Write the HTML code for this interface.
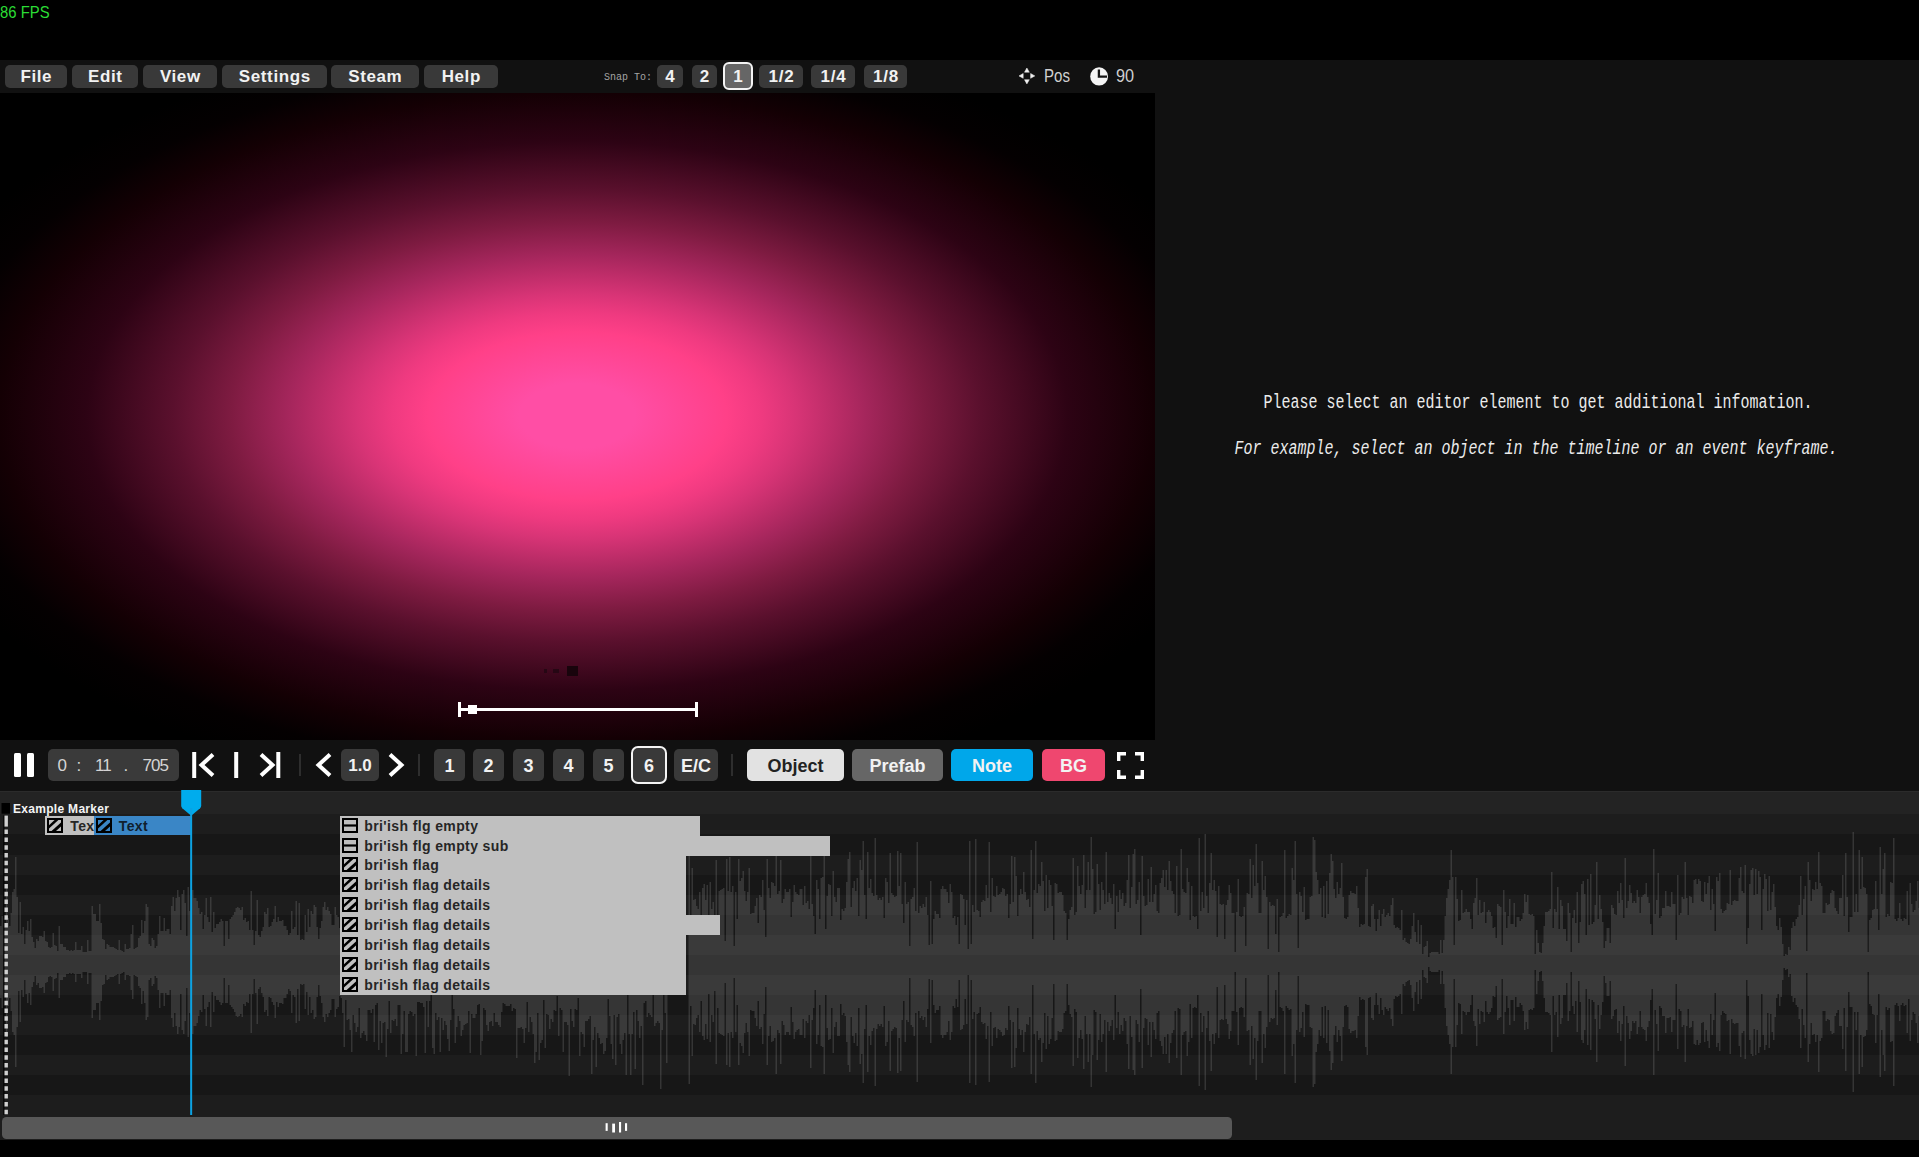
<!DOCTYPE html>
<html lang="en">
<head>
<meta charset="utf-8">
<title>Editor</title>
<style>
*{box-sizing:border-box;margin:0;padding:0}
html,body{width:1919px;height:1157px;overflow:hidden;background:#000}
body{position:relative;font-family:"Liberation Sans",sans-serif;color:#fff}
.abs{position:absolute}
#fps{left:-0.5px;top:2.5px;font-size:17px;line-height:20px;color:#2bdc35;transform:scaleX(0.875);transform-origin:0 0;white-space:nowrap}
#topbar{left:0;top:60px;width:1919px;height:33px;background:#111}
#rightpanel{left:1155px;top:93px;width:764px;height:647px;background:#111}
#preview{left:0;top:93px;width:1155px;height:647px;background:radial-gradient(ellipse 577px 323px at 577px 323px,#ff4ea5 0%,#ff4ea5 10%,#ff4088 26%,#ef3a80 32%,#d83476 38%,#a5265c 50%,#7e1b41 60%,#5a102d 70%,#2d0314 85%,#140004 100%,#040001 110%,#000 120%)}
#toolbar{left:0;top:740px;width:1919px;height:51px;background:#111}
.btn{position:absolute;background:#393939;border-radius:5px;color:#f2f2f2;font-weight:bold;text-align:center;white-space:nowrap}
.menu{top:65px;height:23px;font-size:17px;line-height:23px;letter-spacing:0.6px;text-indent:0.6px}
.snap{top:65px;height:23px;font-size:17px;line-height:23px;letter-spacing:0.8px;text-indent:0.8px}
.tb{top:749px;height:32px;font-size:18px;line-height:32px;padding-top:1px}
.info{left:1036px;width:1000px;text-align:center;font-family:"Liberation Mono",monospace;font-size:19.5px;line-height:24px;color:#ececec;white-space:nowrap;transform:scaleX(0.769);transform-origin:50% 0}
.tm{top:750px;font-size:17px;line-height:32px;color:#d4d4d4;letter-spacing:-1px;white-space:nowrap}
/* timeline */
#tl{left:0;top:791px;width:1919px;height:349px;background:#222;overflow:hidden}
.obj{position:absolute;background:#c0c0c0;color:#262626;font-weight:bold;font-size:14px;letter-spacing:0.38px;white-space:nowrap}
.obj span{position:absolute;left:24px;top:0;line-height:20px}
.ico{position:absolute;left:2px;top:2px;width:16px;height:15px;color:#c0c0c0}
</style>
</head>
<body>
<div id="fps" class="abs">86 FPS</div>
<div id="topbar" class="abs"></div>
<div id="rightpanel" class="abs"></div>
<div id="preview" class="abs"></div>
<div id="toolbar" class="abs"></div>
<div class="btn menu" style="left:5px;width:62px">File</div>
<div class="btn menu" style="left:72px;width:66px">Edit</div>
<div class="btn menu" style="left:143px;width:74px">View</div>
<div class="btn menu" style="left:222px;width:105px">Settings</div>
<div class="btn menu" style="left:331px;width:88px">Steam</div>
<div class="btn menu" style="left:424px;width:74px">Help</div>
<div class="abs" id="snapto" style="left:604px;top:70.5px;font-family:'Liberation Mono',monospace;font-size:10px;line-height:14px;color:#a4a4a4;letter-spacing:0;white-space:nowrap">Snap To:</div>
<div class="btn snap" style="left:657px;width:26px">4</div>
<div class="btn snap" style="left:692px;width:25px">2</div>
<div class="btn snap" style="left:723px;top:62px;width:30px;height:28px;line-height:25.5px;background:#666;border:2px solid #f4f4f4;border-radius:6px">1</div>
<div class="btn snap" style="left:759px;width:44px">1/2</div>
<div class="btn snap" style="left:811px;width:44px">1/4</div>
<div class="btn snap" style="left:864px;width:43px">1/8</div>
<svg class="abs" style="left:1017px;top:66px" width="20" height="20" viewBox="1017 66 20 20"><g fill="#f0f0f0" stroke="#f0f0f0" stroke-width="0.5" stroke-linejoin="round"><path d="M1026.9 68 L1029.3 72.2 H1024.5Z"/><path d="M1026.9 83.9 L1029.3 79.7 H1024.5Z"/><path d="M1019 75.9 L1023.2 73.5 V78.3Z"/><path d="M1034.8 75.9 L1030.6 73.5 V78.3Z"/></g></svg>
<div class="abs" style="left:1043.5px;top:65px;font-size:17.5px;line-height:23px;color:#d0d0d0;transform:scaleX(0.86);transform-origin:0 0;white-space:nowrap">Pos</div>
<svg class="abs" style="left:1089px;top:66px" width="20" height="21" viewBox="1089 66 20 21"><ellipse cx="1099.1" cy="76.4" rx="8.9" ry="9.2" fill="#f4f4f4"/><path d="M1098.9 69.5 V76.7 H1107" stroke="#151515" stroke-width="2.3" fill="none"/></svg>
<div class="abs" style="left:1115.5px;top:65px;font-size:17.5px;line-height:23px;color:#d0d0d0;transform:scaleX(0.93);transform-origin:0 0;white-space:nowrap">90</div>
<div class="abs" style="left:458px;top:702px;width:3px;height:15px;background:#fff"></div>
<div class="abs" style="left:695px;top:702px;width:3px;height:15px;background:#fff"></div>
<div class="abs" style="left:458px;top:708px;width:240px;height:3px;background:#fff"></div>
<div class="abs" style="left:468px;top:705px;width:9px;height:9px;background:#fff"></div>
<div class="abs" style="left:567px;top:666px;width:11px;height:10px;background:#18040c"></div>
<div class="abs" style="left:553px;top:669px;width:6px;height:4px;background:#260714"></div>
<div class="abs" style="left:544px;top:669px;width:3px;height:4px;background:#260714"></div>
<div class="abs info" style="top:390.7px;margin-left:2px">Please select an editor element to get additional infomation.</div>
<div class="abs info" style="top:437.1px;font-style:italic">For example, select an object in the timeline or an event keyframe.</div>

<div class="abs" style="left:14px;top:753px;width:7px;height:24px;background:#fff;border-radius:1.5px"></div>
<div class="abs" style="left:27px;top:753px;width:7px;height:24px;background:#fff;border-radius:1.5px"></div>
<div class="btn tb" style="left:48px;width:131px;background:#3a3a3a"></div>
<div class="abs tm" style="left:57.5px">0</div><div class="abs tm" style="left:76.5px">:</div><div class="abs tm" style="left:95px">11</div><div class="abs tm" style="left:123.5px">.</div><div class="abs tm" style="left:142.5px">705</div>
<svg class="abs" style="left:185px;top:748px" width="225" height="34" viewBox="185 748 225 34" fill="none" stroke="#fff" stroke-width="4">
<path d="M194.2 752 V778"/><path d="M213 754.5 L201.5 765 L213 775.5" stroke-linejoin="miter"/>
<path d="M236.2 752 V778"/>
<path d="M261 754.5 L272.5 765 L261 775.5"/><path d="M278.3 752 V778"/>
<path d="M330 754.5 L318.5 765 L330 775.5"/>
<path d="M390 754.5 L401.5 765 L390 775.5"/>
</svg>
<div class="abs" style="left:299px;top:754px;width:2px;height:22px;background:#2e2e2e"></div>
<div class="btn tb" style="left:341px;width:38px;font-size:17px">1.0</div>
<div class="abs" style="left:418px;top:754px;width:2px;height:22px;background:#2e2e2e"></div>
<div class="btn tb" style="left:434px;width:31px">1</div>
<div class="btn tb" style="left:473px;width:31px">2</div>
<div class="btn tb" style="left:513px;width:31px">3</div>
<div class="btn tb" style="left:553px;width:31px">4</div>
<div class="btn tb" style="left:593px;width:31px">5</div>
<div class="btn tb" style="left:631px;top:746px;width:36px;height:38px;line-height:34px;border:2px solid #f4f4f4;border-radius:7px">6</div>
<div class="btn tb" style="left:674px;width:44px">E/C</div>
<div class="abs" style="left:731px;top:754px;width:2px;height:22px;background:#2e2e2e"></div>
<div class="btn tb" style="left:747px;width:97px;background:#e2e2e2;color:#222">Object</div>
<div class="btn tb" style="left:852px;width:91px;background:#666">Prefab</div>
<div class="btn tb" style="left:951px;width:82px;background:#00a7ea">Note</div>
<div class="btn tb" style="left:1042px;width:63px;background:#ef476f">BG</div>
<svg class="abs" style="left:1117px;top:752px" width="27" height="27" viewBox="0 0 27 27" fill="none" stroke="#fff" stroke-width="3.4"><path d="M1.7 9 V1.7 H9"/><path d="M18 1.7 H25.3 V9"/><path d="M25.3 18 V25.3 H18"/><path d="M9 25.3 H1.7 V18"/></svg>

<svg class="abs" style="left:0;top:0" width="1919" height="1157" viewBox="0 0 1919 1157" shape-rendering="crispEdges">
<rect x="0" y="790.5" width="1919" height="24" fill="#232323"/><rect x="0" y="790.6" width="1919" height="1" fill="#2b2b2b"/>
<rect x="0" y="814.4" width="1919" height="325.6" fill="#1d1d1d"/>
<rect x="0" y="834.45" width="1919" height="20.05" fill="#171717"/><rect x="0" y="874.55" width="1919" height="20.05" fill="#171717"/><rect x="0" y="914.65" width="1919" height="20.05" fill="#171717"/><rect x="0" y="954.75" width="1919" height="20.05" fill="#171717"/><rect x="0" y="994.85" width="1919" height="20.05" fill="#171717"/><rect x="0" y="1034.95" width="1919" height="20.05" fill="#171717"/><rect x="0" y="1075.05" width="1919" height="20.05" fill="#171717"/>
<path id="wave" fill="#fff" fill-opacity="0.13" shape-rendering="geometricPrecision" d="M0,962V926H1.5V916H3V918H4.5V927H6V887H7.5V918H9V926H10.5V913H12V892H13.5V889H15V857H16.5V897H18V933H19.5V902H21V934H22.5V927H24V944H25.5V930H27V921H28.5V931H30V919H31.5V937H33V942H34.5V948H36V939H37.5V941H39V936H42V937H43.5V931H45V941H46.5V942H48V947H49.5V948H51V947H52.5V933H54V945H55.5V946H57V951H58.5V926H60V944H63V947H66V950H69V951H70.5V950H72V951H73.5V950H75V942H76.5V950H81V946H82.5V952H87V940H88.5V951H91.5V906H93V914H96V921H99V904H100.5V923H102V939H103.5V940H105V949H106.5V944H108V945H109.5V947H114V948H115.5V949H117V950H118.5V940H120V950H121.5V951H123V952H124.5V944H126V949H129V948H130.5V934H132V925H133.5V949H135V948H136.5V947H138V938H139.5V936H141V920H142.5V933H144V921H145.5V904H147V907H148.5V944H150V946H151.5V938H153V940H154.5V948H156V946H157.5V934H159V916H160.5V931H163.5V918H165V931H166.5V929H169.5V934H171V906H172.5V897H174V911H175.5V898H177V890H178.5V897H180V930H181.5V894H183V890H184.5V903H186V936H187.5V887H189V911H190.5V910H192V890H193.5V898H196.5V901H198V908H199.5V914H201V912H202.5V929H204V915H205.5V898H207V917H208.5V922H210V897H211.5V932H213V912H214.5V928H216V924H219V922H220.5V919H222V921H223.5V946H225V921H228V939H229.5V919H231V917H232.5V915H234V912H235.5V908H237V907H238.5V908H240V910H241.5V907H243V920H244.5V918H246V922H247.5V921H249V930H250.5V891H252V930H253.5V945H255V931H256.5V900H258V935H259.5V937H261V931H262.5V927H264V912H265.5V914H267V908H268.5V927H270V926H271.5V922H273V919H274.5V906H276V922H277.5V917H279V921H282V920H283.5V926H286.5V930H288V935H289.5V933H291V911H292.5V929H294V927H295.5V901H297V935H298.5V903H300V940H301.5V939H303V940H304.5V915H306V932H307.5V909H309V927H310.5V911H312V914H313.5V905H315V907H316.5V927H318V939H319.5V928H321V921H322.5V907H324V902H325.5V910H327V907H328.5V911H330V914H331.5V925H334.5V907H336V915H337.5V917H339V928H340.5V926H342V911H343.5V877H345V924H346.5V904H348V905H349.5V894H351V872H352.5V909H354V901H355.5V892H357V897H358.5V916H360V886H361.5V891H363V893H364.5V889H366V883H367.5V914H370.5V911H372V915H373.5V882H375V919H376.5V921H378V874H379.5V903H381V881H382.5V901H384V902H385.5V867H387V895H388.5V923H390V891H391.5V904H393V903H394.5V905H396V898H397.5V919H400.5V870H402V890H403.5V913H405V872H408V910H409.5V913H411V912H412.5V908H414V910H415.5V868H417V922H420V921H423V917H424.5V871H426V923H427.5V897H429V923H430.5V944H432V876H433.5V870H435V911H436.5V904H438V907H439.5V872H441V906H442.5V894H444V903H445.5V899H447V885H448.5V873H450V904H451.5V935H453V915H454.5V881H456V897H457.5V908H459V903H460.5V888H462V894H463.5V899H465V900H466.5V901H468V913H469.5V871H471V910H472.5V906H475.5V910H477V919H478.5V920H480V869H481.5V883H483V916H484.5V914H486V899H487.5V893H489V902H490.5V903H492V898H493.5V911H495V902H498V899H499.5V897H501V912H502.5V921H504V920H505.5V918H510V920H511.5V913H513V916H514.5V915H516V866H517.5V896H520.5V897H522V895H523.5V881H525V896H526.5V922H528V892H529.5V907H531V902H532.5V890H534V861H535.5V872H537V911H538.5V864H540V881H541.5V884H543V924H544.5V876H546V910H547.5V909H549V895H550.5V905H552V902H553.5V914H555V913H556.5V928H558V888H559.5V916H561V914H562.5V872H564V902H567V899H568.5V848H570V915H571.5V903H573V897H574.5V915H576V914H577.5V926H579V868H580.5V892H582V890H583.5V877H585V903H588V905H589.5V908H591V850H592.5V884H594V897H595.5V857H597V891H598.5V886H600V880H601.5V881H603V870H604.5V873H606V886H607.5V925H609V908H610.5V880H612V865H613.5V909H615V859H616.5V907H618V910H619.5V880H621V870H622.5V884H624V891H625.5V849H627V933H628.5V890H630V849H631.5V890H633V912H634.5V855H636V914H637.5V903H639V886H640.5V898H642V839H643.5V921H645V923H646.5V907H648V911H649.5V909H651V907H652.5V933H654V898H655.5V901H657V903H658.5V901H660V835H661.5V894H663V935H664.5V911H666V861H667.5V938H669V962H688.5V840H690V918H691.5V868H693V900H694.5V899H696V906H697.5V909H699V892H700.5V923H702V888H703.5V884H705V900H706.5V885H708V930H709.5V882H711V909H712.5V902H714V933H715.5V860H717V916H718.5V891H720V890H721.5V889H723V888H724.5V941H726V859H727.5V891H729V857H730.5V892H732V886H733.5V946H735V892H736.5V919H738V859H739.5V881H741V878H742.5V871H744V891H745.5V901H747V892H748.5V868H750V914H751.5V913H754.5V906H756V898H757.5V923H759V895H760.5V897H762V880H763.5V910H765V937H766.5V859H768V888H769.5V898H771V882H772.5V883H774V886H775.5V850H777V894H778.5V891H780V860H781.5V903H783V899H784.5V889H786V892H789V889H790.5V917H792V902H793.5V885H795V892H796.5V894H798V895H799.5V889H802.5V905H804V886H805.5V903H807V901H808.5V909H810V856H811.5V904H813V916H814.5V934H816V880H817.5V889H819V919H820.5V878H822V877H823.5V850H825V929H826.5V896H828V884H829.5V885H831V916H832.5V871H834V897H835.5V902H837V888H840V920H841.5V909H843V911H844.5V908H846V882H847.5V859H849V852H850.5V907H852V888H853.5V881H855V891H856.5V878H858V916H859.5V860H861V870H862.5V841H864V895H865.5V919H867V852H868.5V888H870V879H871.5V893H873V896H874.5V838H876V895H877.5V900H879V898H880.5V900H882V897H883.5V918H885V878H886.5V882H888V903H889.5V853H891V893H892.5V895H894V897H895.5V896H897V851H898.5V886H900V853H901.5V904H903V923H904.5V882H906V904H907.5V902H909V946H910.5V899H912V897H913.5V888H915V911H916.5V842H918V913H919.5V906H921V908H922.5V904H924V907H925.5V897H927V915H928.5V945H930V881H931.5V944H933V919H934.5V911H936V914H939V918H940.5V889H942V886H943.5V889H946.5V892H948V903H949.5V884H951V892H952.5V918H954V916H955.5V925H957V917H958.5V944H960V894H961.5V895H963V899H964.5V925H966V900H967.5V949H969V841H970.5V944H972V905H973.5V912H975V839H976.5V910H978V911H979.5V917H981V902H982.5V900H984V901H985.5V885H987V898H988.5V842H990V912H991.5V878H993V896H994.5V897H996V886H997.5V895H999V894H1000.5V892H1002V888H1003.5V889H1005V896H1006.5V894H1008V918H1009.5V904H1011V856H1012.5V902H1014V857H1015.5V876H1017V916H1018.5V895H1020V889H1021.5V894H1023V872H1024.5V892H1026V900H1027.5V899H1029V907H1030.5V850H1032V939H1033.5V890H1035V841H1036.5V893H1038V884H1039.5V886H1041V862H1042.5V881H1044V911H1045.5V875H1047V908H1048.5V880H1050V885H1051.5V906H1053V940H1054.5V883H1056V884H1057.5V893H1059V892H1062V895H1063.5V911H1065V913H1066.5V940H1068V919H1069.5V910H1071V907H1072.5V858H1074V915H1075.5V912H1077V866H1078.5V886H1080V894H1081.5V885H1083V855H1084.5V908H1086V890H1087.5V862H1089V890H1090.5V837H1092V869H1093.5V914H1095V912H1096.5V864H1098V884H1099.5V910H1101V882H1102.5V890H1104V904H1105.5V852H1107V902H1108.5V893H1110V898H1111.5V904H1113V884H1114.5V929H1116V896H1117.5V912H1119V890H1120.5V899H1122V893H1123.5V906H1125V903H1126.5V880H1128V855H1129.5V908H1131V887H1132.5V854H1134V849H1135.5V904H1137V900H1138.5V882H1140V935H1141.5V856H1143V896H1144.5V906H1146V905H1147.5V879H1149V902H1150.5V867H1152V902H1153.5V894H1155V885H1156.5V911H1158V913H1159.5V883H1161V878H1162.5V870H1164V887H1165.5V870H1167V890H1168.5V861H1170V881H1171.5V891H1173V894H1174.5V913H1176V866H1177.5V916H1179V915H1180.5V849H1182V889H1183.5V892H1185V893H1186.5V868H1188V882H1189.5V920H1191V886H1192.5V916H1194V917H1195.5V916H1197V929H1198.5V838H1200V911H1201.5V892H1203V908H1204.5V834H1206V896H1207.5V913H1209V883H1210.5V853H1212V890H1213.5V880H1215V891H1216.5V937H1218V886H1219.5V904H1221V905H1222.5V904H1224V939H1225.5V905H1227V900H1228.5V885H1230V893H1231.5V913H1234.5V952H1236V912H1237.5V879H1239V916H1240.5V917H1242V916H1243.5V907H1245V946H1246.5V893H1248V894H1249.5V859H1251V898H1252.5V865H1254V886H1255.5V844H1257V883H1258.5V913H1261.5V861H1263V890H1264.5V876H1266V897H1267.5V949H1269V902H1270.5V906H1272V905H1273.5V906H1275V934H1276.5V899H1278V952H1279.5V917H1281V916H1282.5V913H1284V850H1285.5V918H1287V916H1288.5V914H1290V915H1291.5V868H1293V880H1294.5V841H1296V894H1297.5V948H1299V892H1300.5V896H1302V912H1303.5V887H1305V920H1306.5V919H1309.5V897H1311V896H1312.5V837H1314V840H1315.5V872H1317V880H1318.5V894H1320V888H1321.5V917H1323V886H1324.5V918H1326V881H1327.5V914H1329V873H1330.5V854H1332V861H1333.5V889H1335V898H1336.5V882H1338V894H1339.5V888H1341V863H1342.5V897H1344V918H1345.5V919H1347V917H1348.5V895H1350V891H1351.5V893H1354.5V894H1356V886H1357.5V908H1359V927H1360.5V924H1362V925H1363.5V924H1365V877H1366.5V869H1368V926H1369.5V927H1371V906H1372.5V904H1374V919H1375.5V931H1377V919H1378.5V910H1380V926H1381.5V914H1383V909H1384.5V917H1386V915H1387.5V913H1389V916H1390.5V905H1392V898H1393.5V925H1395V928H1396.5V927H1398V928H1399.5V930H1401V910H1402.5V940H1404V938H1405.5V942H1407V943H1408.5V944H1410V939H1411.5V926H1413V913H1414.5V932H1416V942H1417.5V920H1419V944H1420.5V925H1422V954H1423.5V947H1425V946H1426.5V941H1428V957H1429.5V953H1431V952H1438.5V954H1440V940H1441.5V953H1443V940H1444.5V916H1446V898H1447.5V889H1449V880H1450.5V850H1452V877H1453.5V945H1455V877H1456.5V899H1458V921H1459.5V920H1461V890H1462.5V913H1464V912H1465.5V909H1467V912H1470V919H1471.5V929H1473V903H1474.5V898H1476V878H1477.5V915H1479V900H1480.5V913H1482V912H1483.5V902H1485V923H1486.5V912H1488V910H1489.5V912H1491V916H1492.5V928H1494V927H1495.5V938H1497V904H1498.5V906H1500V907H1501.5V945H1503V890H1504.5V912H1506V928H1507.5V916H1509V899H1510.5V924H1513.5V903H1515V927H1516.5V917H1519.5V921H1521V919H1522.5V913H1524V894H1525.5V902H1527V895H1528.5V914H1530V915H1531.5V914H1533V916H1534.5V954H1536V930H1537.5V943H1539V952H1540.5V953H1542V943H1543.5V926H1545V912H1548V911H1549.5V909H1551V872H1552.5V928H1554V909H1555.5V912H1557V887H1558.5V929H1560V900H1561.5V906H1563V929H1566V941H1567.5V903H1569V913H1570.5V952H1572V918H1573.5V910H1575V923H1576.5V892H1578V943H1579.5V922H1581V884H1582.5V881H1584V894H1585.5V935H1587V879H1588.5V925H1590V874H1591.5V924H1593V922H1594.5V905H1596V862H1597.5V919H1599V895H1600.5V909H1602V922H1603.5V948H1605V941H1606.5V928H1609.5V943H1611V905H1612.5V908H1614V914H1615.5V915H1617V891H1618.5V903H1620V883H1621.5V900H1623V918H1624.5V858H1626V908H1627.5V901H1629V885H1630.5V893H1632V903H1633.5V901H1635V903H1636.5V890H1638V897H1639.5V913H1641V897H1642.5V895H1644V894H1645.5V883H1647V897H1648.5V903H1650V924H1651.5V935H1653V849H1654.5V914H1656V900H1657.5V873H1659V918H1660.5V916H1662V908H1665V891H1666.5V906H1669.5V907H1671V892H1672.5V904H1675.5V940H1677V875H1678.5V915H1680V913H1681.5V897H1683V899H1684.5V862H1686V898H1687.5V915H1689V896H1690.5V897H1692V903H1693.5V880H1695V879H1696.5V884H1698V879H1699.5V881H1701V901H1702.5V902H1704V882H1705.5V894H1707V883H1708.5V876H1710V910H1711.5V889H1713V904H1714.5V931H1716V877H1717.5V881H1719V873H1720.5V909H1722V913H1723.5V911H1725V910H1726.5V903H1728V904H1729.5V870H1731V905H1732.5V901H1734V900H1735.5V901H1738.5V878H1740V867H1741.5V891H1743V893H1744.5V865H1746V944H1747.5V928H1749V884H1750.5V870H1752V868H1753.5V895H1755V869H1756.5V894H1758V871H1759.5V877H1761V930H1762.5V889H1764V874H1765.5V879H1767V911H1768.5V876H1770V910H1771.5V892H1773V884H1774.5V907H1776V926H1777.5V930H1779V918H1780.5V927H1782V944H1783.5V956H1785V954H1786.5V955H1788V947H1789.5V950H1791V928H1792.5V922H1794V926H1795.5V919H1797V917H1798.5V905H1800V876H1801.5V915H1803V899H1804.5V886H1806V951H1807.5V862H1809V880H1810.5V901H1812V889H1813.5V890H1815V882H1816.5V889H1818V852H1819.5V883H1821V886H1822.5V913H1825.5V903H1827V905H1828.5V904H1830V893H1831.5V890H1833V891H1834.5V908H1836V911H1837.5V914H1839V898H1842V875H1843.5V916H1845V853H1846.5V897H1848V932H1849.5V917H1852.5V832H1854V912H1855.5V894H1857V912H1858.5V850H1860V889H1861.5V857H1863V887H1864.5V888H1866V894H1867.5V952H1869V920H1870.5V918H1872V910H1873.5V909H1875V881H1876.5V909H1878V930H1879.5V847H1881V894H1882.5V869H1884V853H1885.5V917H1887V914H1888.5V916H1890V882H1891.5V883H1893V838H1894.5V919H1896V921H1897.5V918H1899V903H1900.5V919H1902V921H1903.5V918H1905V919H1906.5V891H1908V925H1909.5V883H1911V904H1912.5V912H1914V910H1915.5V901H1917V881H1918.5V908H1920V962V1016H1918.5V1043H1917V1023H1915.5V1014H1914V1012H1912.5V1020H1911V1041H1909.5V999H1908V1033H1906.5V1005H1905V1006H1903.5V1003H1902V1005H1900.5V1021H1899V1006H1897.5V1003H1896V1005H1894.5V1086H1893V1041H1891.5V1042H1890V1008H1888.5V1010H1887V1007H1885.5V1071H1884V1055H1882.5V1030H1881V1077H1879.5V994H1878V1015H1876.5V1043H1875V1015H1873.5V1014H1872V1006H1870.5V1004H1869V972H1867.5V1030H1866V1036H1864.5V1037H1863V1067H1861.5V1035H1860V1074H1858.5V1012H1857V1030H1855.5V1012H1854V1092H1852.5V1007H1849.5V992H1848V1027H1846.5V1071H1845V1008H1843.5V1049H1842V1026H1839V1010H1837.5V1013H1836V1016H1834.5V1033H1833V1034H1831.5V1031H1830V1020H1828.5V1019H1827V1021H1825.5V1011H1822.5V1038H1821V1041H1819.5V1072H1818V1035H1816.5V1042H1815V1034H1813.5V1035H1812V1023H1810.5V1044H1809V1062H1807.5V973H1806V1038H1804.5V1025H1803V1009H1801.5V1048H1800V1019H1798.5V1007H1797V1005H1795.5V998H1794V1002H1792.5V996H1791V974H1789.5V977H1788V969H1786.5V970H1785V968H1783.5V980H1782V997H1780.5V1006H1779V994H1777.5V998H1776V1017H1774.5V1040H1773V1032H1771.5V1014H1770V1048H1768.5V1013H1767V1045H1765.5V1050H1764V1035H1762.5V994H1761V1047H1759.5V1053H1758V1030H1756.5V1055H1755V1029H1753.5V1056H1752V1054H1750.5V1040H1749V996H1747.5V980H1746V1059H1744.5V1031H1743V1033H1741.5V1057H1740V1046H1738.5V1023H1735.5V1024H1734V1023H1732.5V1019H1731V1054H1729.5V1020H1728V1021H1726.5V1014H1725V1013H1723.5V1011H1722V1015H1720.5V1051H1719V1043H1717.5V1047H1716V993H1714.5V1020H1713V1035H1711.5V1014H1710V1048H1708.5V1041H1707V1030H1705.5V1042H1704V1022H1702.5V1023H1701V1043H1699.5V1045H1698V1040H1696.5V1045H1695V1044H1693.5V1021H1692V1027H1690.5V1028H1689V1009H1687.5V1026H1686V1062H1684.5V1025H1683V1027H1681.5V1011H1680V1009H1678.5V1049H1677V984H1675.5V1020H1672.5V1032H1671V1017H1669.5V1018H1666.5V1033H1665V1016H1662V1008H1660.5V1006H1659V1051H1657.5V1024H1656V1010H1654.5V1075H1653V989H1651.5V1000H1650V1021H1648.5V1027H1647V1041H1645.5V1030H1644V1029H1642.5V1027H1641V1011H1639.5V1027H1638V1034H1636.5V1021H1635V1023H1633.5V1021H1632V1031H1630.5V1039H1629V1023H1627.5V1016H1626V1066H1624.5V1006H1623V1024H1621.5V1041H1620V1021H1618.5V1033H1617V1009H1615.5V1010H1614V1016H1612.5V1019H1611V981H1609.5V996H1606.5V983H1605V976H1603.5V1002H1602V1015H1600.5V1029H1599V1005H1597.5V1062H1596V1019H1594.5V1002H1593V1000H1591.5V1050H1590V999H1588.5V1045H1587V989H1585.5V1030H1584V1043H1582.5V1040H1581V1002H1579.5V981H1578V1032H1576.5V1001H1575V1014H1573.5V1006H1572V972H1570.5V1011H1569V1021H1567.5V983H1566V995H1563V1018H1561.5V1024H1560V995H1558.5V1037H1557V1012H1555.5V1015H1554V996H1552.5V1052H1551V1015H1549.5V1013H1548V1012H1545V998H1543.5V981H1542V971H1540.5V972H1539V981H1537.5V994H1536V970H1534.5V1008H1533V1010H1531.5V1009H1530V1010H1528.5V1029H1527V1022H1525.5V1030H1524V1011H1522.5V1005H1521V1003H1519.5V1007H1516.5V997H1515V1021H1513.5V1000H1510.5V1025H1509V1008H1507.5V996H1506V1012H1504.5V1034H1503V979H1501.5V1017H1500V1018H1498.5V1020H1497V986H1495.5V997H1494V996H1492.5V1008H1491V1012H1489.5V1014H1488V1012H1486.5V1001H1485V1022H1483.5V1012H1482V1011H1480.5V1024H1479V1009H1477.5V1046H1476V1026H1474.5V1021H1473V995H1471.5V1005H1470V1012H1467V1015H1465.5V1012H1464V1011H1462.5V1034H1461V1004H1459.5V1003H1458V1025H1456.5V1047H1455V979H1453.5V1047H1452V1074H1450.5V1044H1449V1035H1447.5V1026H1446V1008H1444.5V984H1443V971H1441.5V984H1440V970H1438.5V972H1431V971H1429.5V967H1428V983H1426.5V978H1425V977H1423.5V970H1422V999H1420.5V980H1419V1004H1417.5V982H1416V992H1414.5V1011H1413V998H1411.5V985H1410V980H1408.5V981H1407V982H1405.5V986H1404V984H1402.5V1014H1401V994H1399.5V996H1398V997H1396.5V996H1395V999H1393.5V1026H1392V1019H1390.5V1008H1389V1011H1387.5V1009H1386V1007H1384.5V1015H1383V1010H1381.5V998H1380V1014H1378.5V1005H1377V993H1375.5V1005H1374V1020H1372.5V1018H1371V997H1369.5V998H1368V1055H1366.5V1047H1365V1000H1363.5V999H1362V1000H1360.5V997H1359V1016H1357.5V1038H1356V1030H1354.5V1031H1351.5V1033H1350V1029H1348.5V1007H1347V1005H1345.5V1006H1344V1027H1342.5V1061H1341V1036H1339.5V1030H1338V1042H1336.5V1026H1335V1035H1333.5V1063H1332V1070H1330.5V1051H1329V1010H1327.5V1043H1326V1006H1324.5V1038H1323V1007H1321.5V1036H1320V1030H1318.5V1044H1317V1052H1315.5V1084H1314V1087H1312.5V1028H1311V1027H1309.5V1005H1306.5V1004H1305V1037H1303.5V1012H1302V1028H1300.5V1032H1299V976H1297.5V1030H1296V1083H1294.5V1044H1293V1056H1291.5V1009H1290V1010H1288.5V1008H1287V1006H1285.5V1074H1284V1011H1282.5V1008H1281V1007H1279.5V972H1278V1025H1276.5V990H1275V1018H1273.5V1019H1272V1018H1270.5V1022H1269V975H1267.5V1027H1266V1048H1264.5V1034H1263V1063H1261.5V1011H1258.5V1041H1257V1080H1255.5V1038H1254V1059H1252.5V1026H1251V1065H1249.5V1030H1248V1031H1246.5V978H1245V1017H1243.5V1008H1242V1007H1240.5V1008H1239V1045H1237.5V1012H1236V972H1234.5V1011H1231.5V1031H1230V1039H1228.5V1024H1227V1019H1225.5V985H1224V1020H1222.5V1019H1221V1020H1219.5V1038H1218V987H1216.5V1033H1215V1044H1213.5V1034H1212V1071H1210.5V1041H1209V1011H1207.5V1028H1206V1090H1204.5V1016H1203V1032H1201.5V1013H1200V1086H1198.5V995H1197V1008H1195.5V1007H1194V1008H1192.5V1038H1191V1004H1189.5V1042H1188V1056H1186.5V1031H1185V1032H1183.5V1035H1182V1075H1180.5V1009H1179V1008H1177.5V1058H1176V1011H1174.5V1030H1173V1033H1171.5V1043H1170V1063H1168.5V1034H1167V1054H1165.5V1037H1164V1054H1162.5V1046H1161V1041H1159.5V1011H1158V1013H1156.5V1039H1155V1030H1153.5V1022H1152V1057H1150.5V1022H1149V1045H1147.5V1019H1146V1018H1144.5V1028H1143V1068H1141.5V989H1140V1042H1138.5V1024H1137V1020H1135.5V1075H1134V1070H1132.5V1037H1131V1016H1129.5V1069H1128V1044H1126.5V1021H1125V1018H1123.5V1031H1122V1025H1120.5V1034H1119V1012H1117.5V1028H1116V995H1114.5V1040H1113V1020H1111.5V1026H1110V1031H1108.5V1022H1107V1072H1105.5V1020H1104V1034H1102.5V1042H1101V1014H1099.5V1040H1098V1060H1096.5V1012H1095V1010H1093.5V1055H1092V1087H1090.5V1034H1089V1062H1087.5V1034H1086V1016H1084.5V1069H1083V1039H1081.5V1030H1080V1038H1078.5V1058H1077V1012H1075.5V1009H1074V1066H1072.5V1017H1071V1014H1069.5V1005H1068V984H1066.5V1011H1065V1013H1063.5V1029H1062V1032H1059V1031H1057.5V1040H1056V1041H1054.5V984H1053V1018H1051.5V1039H1050V1044H1048.5V1016H1047V1049H1045.5V1013H1044V1043H1042.5V1062H1041V1038H1039.5V1040H1038V1031H1036.5V1083H1035V1034H1033.5V985H1032V1074H1030.5V1017H1029V1025H1027.5V1024H1026V1032H1024.5V1052H1023V1030H1021.5V1035H1020V1029H1018.5V1008H1017V1048H1015.5V1067H1014V1022H1012.5V1068H1011V1020H1009.5V1006H1008V1030H1006.5V1028H1005V1035H1003.5V1036H1002V1032H1000.5V1030H999V1029H997.5V1038H996V1027H994.5V1028H993V1046H991.5V1012H990V1082H988.5V1026H987V1039H985.5V1023H984V1024H982.5V1022H981V1007H979.5V1013H978V1014H976.5V1085H975V1012H973.5V1019H972V980H970.5V1083H969V975H967.5V1024H966V999H964.5V1025H963V1029H961.5V1030H960V980H958.5V1007H957V999H955.5V1008H954V1006H952.5V1032H951V1040H949.5V1021H948V1032H946.5V1035H943.5V1038H942V1035H940.5V1006H939V1010H936V1013H934.5V1005H933V980H931.5V1043H930V979H928.5V1009H927V1027H925.5V1017H924V1020H922.5V1016H921V1018H919.5V1011H918V1082H916.5V1013H915V1036H913.5V1027H912V1025H910.5V978H909V1022H907.5V1020H906V1042H904.5V1001H903V1020H901.5V1071H900V1038H898.5V1073H897V1028H895.5V1027H894V1029H892.5V1031H891V1071H889.5V1021H888V1042H886.5V1046H885V1006H883.5V1027H882V1024H880.5V1026H879V1024H877.5V1029H876V1086H874.5V1028H873V1031H871.5V1045H870V1036H868.5V1072H867V1005H865.5V1029H864V1083H862.5V1054H861V1064H859.5V1008H858V1046H856.5V1033H855V1043H853.5V1036H852V1017H850.5V1072H849V1065H847.5V1042H846V1016H844.5V1013H843V1015H841.5V1004H840V1036H837V1022H835.5V1027H834V1053H832.5V1008H831V1039H829.5V1040H828V1028H826.5V995H825V1074H823.5V1047H822V1046H820.5V1005H819V1035H817.5V1044H816V990H814.5V1008H813V1020H811.5V1068H810V1015H808.5V1023H807V1021H805.5V1038H804V1019H802.5V1035H799.5V1029H798V1030H796.5V1032H795V1039H793.5V1022H792V1007H790.5V1035H789V1032H786V1035H784.5V1025H783V1021H781.5V1064H780V1033H778.5V1030H777V1074H775.5V1038H774V1041H772.5V1042H771V1026H769.5V1036H768V1065H766.5V987H765V1014H763.5V1044H762V1027H760.5V1029H759V1001H757.5V1026H756V1018H754.5V1011H751.5V1010H750V1056H748.5V1032H747V1023H745.5V1033H744V1053H742.5V1046H741V1043H739.5V1065H738V1005H736.5V1032H735V978H733.5V1038H732V1032H730.5V1067H729V1033H727.5V1065H726V983H724.5V1036H723V1035H721.5V1034H720V1033H718.5V1008H717V1064H715.5V991H714V1022H712.5V1015H711V1042H709.5V994H708V1039H706.5V1024H705V1040H703.5V1036H702V1001H700.5V1032H699V1015H697.5V1018H696V1025H694.5V1024H693V1056H691.5V1006H690V1084H688.5V962H669V986H667.5V1063H666V1013H664.5V989H663V1030H661.5V1089H660V1023H658.5V1021H657V1023H655.5V1026H654V991H652.5V1017H651V1015H649.5V1013H648V1017H646.5V1001H645V1003H643.5V1085H642V1026H640.5V1038H639V1021H637.5V1010H636V1069H634.5V1012H633V1034H631.5V1075H630V1034H628.5V991H627V1075H625.5V1033H624V1040H622.5V1054H621V1044H619.5V1014H618V1017H616.5V1065H615V1015H613.5V1059H612V1044H610.5V1016H609V999H607.5V1038H606V1051H604.5V1054H603V1043H601.5V1044H600V1038H598.5V1033H597V1067H595.5V1027H594V1040H592.5V1074H591V1016H589.5V1019H588V1021H585V1047H583.5V1034H582V1032H580.5V1056H579V998H577.5V1010H576V1009H574.5V1027H573V1021H571.5V1009H570V1076H568.5V1025H567V1022H564V1052H562.5V1010H561V1008H559.5V1036H558V996H556.5V1011H555V1010H553.5V1022H552V1019H550.5V1029H549V1015H547.5V1014H546V1048H544.5V1000H543V1040H541.5V1043H540V1060H538.5V1013H537V1052H535.5V1063H534V1034H532.5V1022H531V1017H529.5V1032H528V1002H526.5V1028H525V1043H523.5V1029H522V1027H520.5V1028H517.5V1058H516V1009H514.5V1008H513V1011H511.5V1004H510V1006H505.5V1004H504V1003H502.5V1012H501V1027H499.5V1025H498V1022H495V1013H493.5V1026H492V1021H490.5V1022H489V1031H487.5V1025H486V1010H484.5V1008H483V1041H481.5V1055H480V1004H478.5V1005H477V1014H475.5V1018H472.5V1014H471V1053H469.5V1011H468V1023H466.5V1024H465V1025H463.5V1030H462V1036H460.5V1021H459V1016H457.5V1027H456V1043H454.5V1009H453V989H451.5V1020H450V1051H448.5V1039H447V1025H445.5V1021H444V1030H442.5V1018H441V1052H439.5V1017H438V1020H436.5V1013H435V1054H433.5V1048H432V980H430.5V1001H429V1027H427.5V1001H426V1053H424.5V1007H423V1003H420V1002H417V1056H415.5V1014H414V1016H412.5V1012H411V1011H409.5V1014H408V1052H405V1011H403.5V1034H402V1054H400.5V1005H397.5V1026H396V1019H394.5V1021H393V1020H391.5V1033H390V1001H388.5V1029H387V1057H385.5V1022H384V1023H382.5V1043H381V1021H379.5V1050H378V1003H376.5V1005H375V1042H373.5V1009H372V1013H370.5V1010H367.5V1041H366V1035H364.5V1031H363V1033H361.5V1038H360V1008H358.5V1027H357V1032H355.5V1023H354V1015H352.5V1052H351V1030H349.5V1019H348V1020H346.5V1000H345V1047H343.5V1013H342V998H340.5V996H339V1007H337.5V1009H336V1017H334.5V999H331.5V1010H330V1013H328.5V1017H327V1014H325.5V1022H324V1017H322.5V1003H321V996H319.5V985H318V997H316.5V1017H315V1019H313.5V1010H312V1013H310.5V997H309V1015H307.5V992H306V1009H304.5V984H303V985H301.5V984H300V1021H298.5V989H297V1023H295.5V997H294V995H292.5V1013H291V991H289.5V989H288V994H286.5V998H283.5V1004H282V1003H279V1007H277.5V1002H276V1018H274.5V1005H273V1002H271.5V998H270V997H268.5V1016H267V1010H265.5V1012H264V997H262.5V993H261V987H259.5V989H258V1024H256.5V993H255V979H253.5V994H252V1033H250.5V994H249V1003H247.5V1002H246V1006H244.5V1004H243V1017H241.5V1014H240V1016H238.5V1017H237V1016H235.5V1012H234V1009H232.5V1007H231V1005H229.5V985H228V1003H225V978H223.5V1003H222V1005H220.5V1002H219V1000H216V996H214.5V1012H213V992H211.5V1027H210V1002H208.5V1007H207V1026H205.5V1009H204V995H202.5V1012H201V1010H199.5V1016H198V1023H196.5V1026H193.5V1034H192V1014H190.5V1013H189V1037H187.5V988H186V1021H184.5V1034H183V1030H181.5V994H180V1027H178.5V1034H177V1026H175.5V1013H174V1027H172.5V1018H171V990H169.5V995H166.5V993H165V1006H163.5V993H160.5V1008H159V990H157.5V978H156V976H154.5V984H153V986H151.5V978H150V980H148.5V1017H147V1020H145.5V1003H144V991H142.5V1004H141V988H139.5V986H138V977H136.5V976H135V975H133.5V999H132V990H130.5V976H129V975H126V980H124.5V972H123V973H121.5V974H120V984H118.5V974H117V975H115.5V976H114V977H109.5V979H108V980H106.5V975H105V984H103.5V985H102V1001H100.5V1020H99V1003H96V1010H93V1018H91.5V973H88.5V984H87V972H82.5V978H81V974H76.5V982H75V974H73.5V973H72V974H70.5V973H69V974H66V977H63V980H60V998H58.5V973H57V978H55.5V979H54V991H52.5V977H51V976H49.5V977H48V982H46.5V983H45V993H43.5V987H42V988H39V983H37.5V985H36V976H34.5V982H33V987H31.5V1005H30V993H28.5V1003H27V994H25.5V980H24V997H22.5V990H21V1022H19.5V991H18V1027H16.5V1067H15V1035H13.5V1032H12V1011H10.5V998H9V1006H7.5V1037H6V997H4.5V1006H3V1008H1.5V998H0Z"/>
<rect x="3.2" y="815.5" width="1.3" height="299.5" fill="#050505" shape-rendering="auto"/>
<rect x="4.5" y="815.6" width="3.4" height="11" fill="#d0d0d0" shape-rendering="auto"/><path d="M6.2 829.6V1115" stroke="#d0d0d0" stroke-width="3.4" stroke-dasharray="4.5 3.28" shape-rendering="auto" fill="none"/>
<rect x="1.5" y="803" width="8.5" height="10.7" fill="#000" shape-rendering="auto"/>
</svg>
<div class="obj" style="left:340.3px;top:815.70px;width:360.0px;height:20px"><svg class="ico" viewBox="0 0 16 15"><rect x="1" y="1" width="14" height="13" fill="none" stroke="#000" stroke-width="2"/><rect x="1" y="6.4" width="14" height="2.2" fill="#000"/></svg><span>bri'ish flg empty</span></div>
<div class="obj" style="left:340.3px;top:835.55px;width:489.5px;height:20px"><svg class="ico" viewBox="0 0 16 15"><rect x="1" y="1" width="14" height="13" fill="none" stroke="#000" stroke-width="2"/><rect x="1" y="6.4" width="14" height="2.2" fill="#000"/></svg><span>bri'ish flg empty sub</span></div>
<div class="obj" style="left:340.3px;top:855.40px;width:345.5px;height:20px"><svg class="ico" viewBox="0 0 16 15"><rect width="16" height="15" fill="#000"/><g fill="currentColor"><path d="M2 2H7.6L2 7.2Z"/><path d="M14 13H9L14 8.4Z"/><path d="M2 13V10.6L11.4 2H14V4.4L4.6 13Z"/></g></svg><span>bri'ish flag</span></div>
<div class="obj" style="left:340.3px;top:875.25px;width:345.5px;height:20px"><svg class="ico" viewBox="0 0 16 15"><rect width="16" height="15" fill="#000"/><g fill="currentColor"><path d="M2 2H7.6L2 7.2Z"/><path d="M14 13H9L14 8.4Z"/><path d="M2 13V10.6L11.4 2H14V4.4L4.6 13Z"/></g></svg><span>bri'ish flag details</span></div>
<div class="obj" style="left:340.3px;top:895.10px;width:345.5px;height:20px"><svg class="ico" viewBox="0 0 16 15"><rect width="16" height="15" fill="#000"/><g fill="currentColor"><path d="M2 2H7.6L2 7.2Z"/><path d="M14 13H9L14 8.4Z"/><path d="M2 13V10.6L11.4 2H14V4.4L4.6 13Z"/></g></svg><span>bri'ish flag details</span></div>
<div class="obj" style="left:340.3px;top:914.95px;width:380.0px;height:20px"><svg class="ico" viewBox="0 0 16 15"><rect width="16" height="15" fill="#000"/><g fill="currentColor"><path d="M2 2H7.6L2 7.2Z"/><path d="M14 13H9L14 8.4Z"/><path d="M2 13V10.6L11.4 2H14V4.4L4.6 13Z"/></g></svg><span>bri'ish flag details</span></div>
<div class="obj" style="left:340.3px;top:934.80px;width:345.5px;height:20px"><svg class="ico" viewBox="0 0 16 15"><rect width="16" height="15" fill="#000"/><g fill="currentColor"><path d="M2 2H7.6L2 7.2Z"/><path d="M14 13H9L14 8.4Z"/><path d="M2 13V10.6L11.4 2H14V4.4L4.6 13Z"/></g></svg><span>bri'ish flag details</span></div>
<div class="obj" style="left:340.3px;top:954.65px;width:345.5px;height:20px"><svg class="ico" viewBox="0 0 16 15"><rect width="16" height="15" fill="#000"/><g fill="currentColor"><path d="M2 2H7.6L2 7.2Z"/><path d="M14 13H9L14 8.4Z"/><path d="M2 13V10.6L11.4 2H14V4.4L4.6 13Z"/></g></svg><span>bri'ish flag details</span></div>
<div class="obj" style="left:340.3px;top:974.50px;width:345.5px;height:20px"><svg class="ico" viewBox="0 0 16 15"><rect width="16" height="15" fill="#000"/><g fill="currentColor"><path d="M2 2H7.6L2 7.2Z"/><path d="M14 13H9L14 8.4Z"/><path d="M2 13V10.6L11.4 2H14V4.4L4.6 13Z"/></g></svg><span>bri'ish flag details</span></div>
<div class="obj" style="left:44.8px;top:815.8px;width:50px;height:19.2px;overflow:hidden"><svg class="ico" viewBox="0 0 16 15"><rect width="16" height="15" fill="#000"/><g fill="currentColor"><path d="M2 2H7.6L2 7.2Z"/><path d="M14 13H9L14 8.4Z"/><path d="M2 13V10.6L11.4 2H14V4.4L4.6 13Z"/></g></svg><span style="left:25.5px">Tex</span></div>
<div class="obj" style="left:94.3px;top:815.8px;width:96.5px;height:19.2px;background:#3a86c6;color:#10202e"><svg class="ico" style="left:1.5px;color:#3a86c6" viewBox="0 0 16 15"><rect width="16" height="15" fill="#000"/><g fill="currentColor"><path d="M2 2H7.6L2 7.2Z"/><path d="M14 13H9L14 8.4Z"/><path d="M2 13V10.6L11.4 2H14V4.4L4.6 13Z"/></g></svg><span style="left:24.5px">Text</span></div>
<div class="abs" style="left:13px;top:801.8px;font-size:12px;line-height:15px;font-weight:bold;color:#f4f4f4;letter-spacing:0.3px;white-space:nowrap">Example Marker</div>
<svg class="abs" style="left:180px;top:790px" width="24" height="326" viewBox="180 790 24 326"><path d="M181.2 790.1 H201.2 V805.8 Q201.2 807.2 200.1 808.2 L192.4 814.8 Q191.2 815.8 190 814.8 L182.3 808.2 Q181.2 807.2 181.2 805.8Z" fill="#00aced"/><rect x="190.15" y="808" width="2" height="307" fill="#0ca2e2"/></svg>
<div class="abs" style="left:2px;top:1117.3px;width:1229.6px;height:21.3px;background:#585858;border-radius:4.5px"></div>
<svg class="abs" style="left:604px;top:1120px" width="26" height="14" viewBox="604 1120 26 14" fill="#fff"><rect x="605.6" y="1123.2" width="2.1" height="7.7"/><rect x="612.2" y="1123.6" width="2.8" height="8.9"/><rect x="619" y="1122" width="2.1" height="10.5"/><rect x="625" y="1123.2" width="2.1" height="7.7"/></svg>

</body>
</html>
